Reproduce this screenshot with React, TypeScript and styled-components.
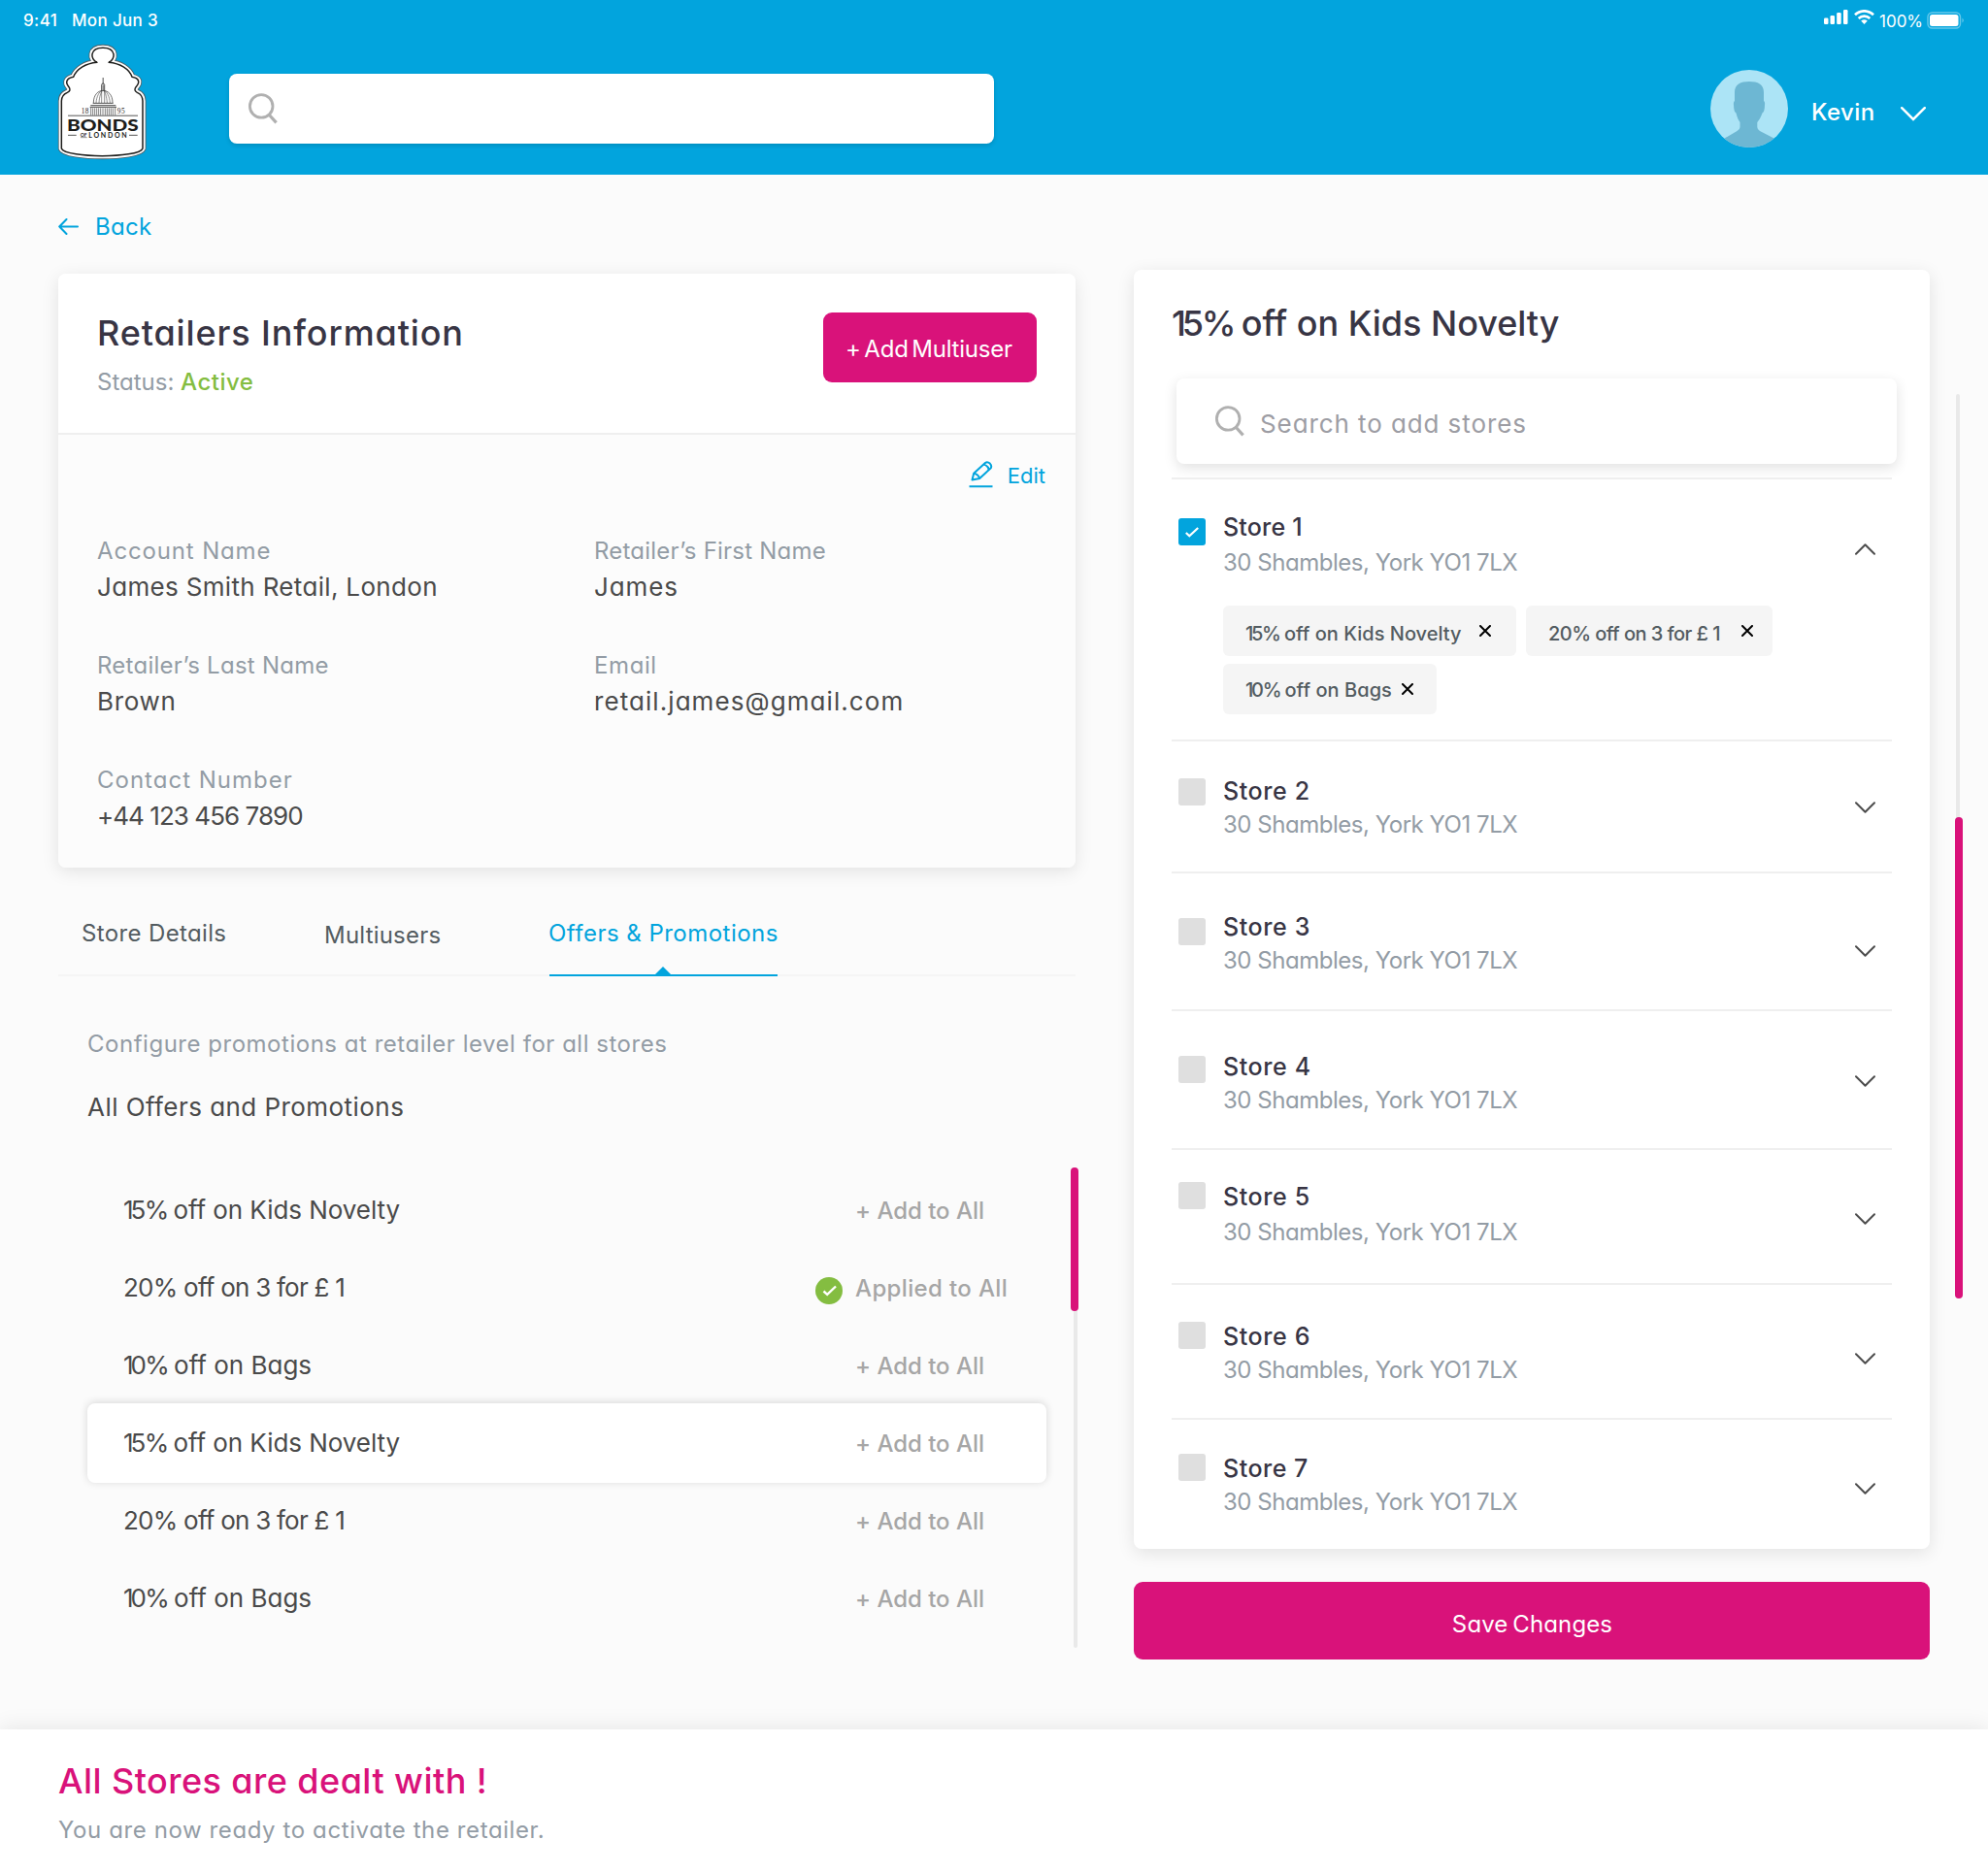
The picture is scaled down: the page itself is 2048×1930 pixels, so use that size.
import React from 'react';
import styled, { createGlobalStyle, css } from 'styled-components';

const color = {
  blue: '#02a4dd',
  pink: '#d9127a',
  green: '#84bd41',
  page: '#fbfbfb',
  heading: '#383544',
  value: '#4a4a4a',
  label: '#939ca5',
  slate: '#535c61',
  action: '#a6a6a6',
  line: '#efefef',
  track: '#e9e9e9',
};

const GlobalStyle = createGlobalStyle`
  *, *::before, *::after { box-sizing: border-box; }
  body {
    margin: 0;
    background: ${color.page};
    font-family: Inter, 'Open Sans', sans-serif;
    font-feature-settings: 'cv11', 'calt' 0;
  }
  svg { display: block; flex: none; }
  button { font: inherit; font-feature-settings: inherit; border: 0; padding: 0; background: none; }
`;

type Spacing = { $ls?: number };

const type = (size: number, line: number, weight: number, fill: string) => css<Spacing>`
  font-size: ${size}px;
  line-height: ${line}px;
  font-weight: ${weight};
  color: ${fill};
  letter-spacing: ${(p) => p.$ls ?? 0}px;
  white-space: nowrap;
`;

const Page = styled.div`
  width: 2048px;
  height: 1930px;
  display: flex;
  flex-direction: column;
  overflow: hidden;
`;

/* ---------- Header ---------- */

const Header = styled.header`
  height: 180px;
  flex: none;
  background: ${color.blue};
`;

const StatusBar = styled.div`
  height: 41px;
  display: flex;
  align-items: center;
  padding: 0 23px 0 24px;
`;

const StatusText = styled.span<Spacing & { $weight?: number }>`
  ${type(17, 20, 500, '#fff')}
  font-weight: ${(p) => p.$weight ?? 500};
`;

const Clock = styled(StatusText)`
  width: 50px;
`;

const StatusIcons = styled.div`
  margin-left: auto;
  height: 41px;
  display: flex;
  align-items: flex-start;

  svg:nth-child(1) { margin-top: 10px; }
  svg:nth-child(2) { margin: 10px 5px 0 6px; }
  ${StatusText} { margin-top: 12px; width: 49px; }
  svg:nth-child(4) { margin-top: 12px; }
`;

const NavRow = styled.div`
  display: flex;
  align-items: flex-start;
  padding: 3px 64px 0 59px;
`;

const HeaderSearch = styled.div`
  width: 788px;
  height: 72px;
  margin: 32px 0 0 85px;
  padding: 20px;
  border-radius: 8px;
  background: #fff;
  box-shadow: 0 2px 4px rgba(0, 0, 0, 0.14);
`;

const UserMenu = styled.div`
  display: flex;
  align-items: center;
  margin: 28px 0 0 auto;

  > svg:last-child { margin-top: 10px; }
`;

const UserName = styled.span<Spacing>`
  ${type(24, 32, 500, '#fff')}
  width: 92px;
  margin: 7px 0 0 24px;
`;

/* ---------- Layout ---------- */

const Main = styled.main`
  height: 1602px;
  flex: none;
  display: flex;
  align-items: flex-start;
  padding-left: 60px;
`;

const LeftColumn = styled.section`
  width: 1048px;
  padding-top: 38px;
`;

const RightColumn = styled.section`
  width: 820px;
  margin-left: 60px;
  padding-top: 98px;
`;

const cardShadow = css`
  box-shadow: 0 4px 18px rgba(0, 0, 0, 0.1);
`;

/* ---------- Retailer card ---------- */

const BackLink = styled.a<Spacing>`
  ${type(24, 32, 400, color.blue)}
  display: flex;
  align-items: center;
  gap: 17px;
  margin-bottom: 32px;

  svg { margin-top: -2px; }
`;

const Card = styled.div`
  height: 612px;
  border-radius: 8px;
  overflow: hidden;
  background: #fcfcfc;
`;

const CardFrame = styled.div`
  border-radius: 8px;
  ${cardShadow}
`;

const CardHeader = styled.div`
  height: 166px;
  display: flex;
  justify-content: space-between;
  align-items: flex-start;
  padding: 39px 40px 0;
  background: #fff;
  border-bottom: 2px solid ${color.line};
`;

const Title = styled.h1<Spacing>`
  ${type(36, 44, 500, color.heading)}
  margin: 0 0 13px;
`;

const Status = styled.div<Spacing>`
  ${type(24, 32, 400, color.label)}
`;

const StatusValue = styled.span<Spacing>`
  ${type(24, 32, 500, color.green)}
`;

const PrimaryButton = styled.button<Spacing>`
  ${type(24, 32, 400, '#fff')}
  width: 220px;
  height: 72px;
  margin-top: 1px;
  padding: 3px 2px 0 0;
  border-radius: 9px;
  word-spacing: -3px;
  background: ${color.pink};
`;

const CardBody = styled.div`
  padding: 27px 31px 0 40px;
`;

const EditLink = styled.a<Spacing>`
  ${type(22, 30, 400, color.blue)}
  display: flex;
  justify-content: flex-end;
  gap: 15px;
`;

const Fields = styled.dl`
  display: grid;
  grid-template-columns: 512px 1fr;
  row-gap: 48px;
  margin: 47px 0 0;
`;

const FieldLabel = styled.dt<Spacing>`
  ${type(24, 32, 400, color.label)}
`;

const FieldValue = styled.dd<Spacing>`
  ${type(26, 34, 400, color.value)}
  margin: 4px 0 0;
`;

/* ---------- Tabs ---------- */

const Tabs = styled.nav`
  display: grid;
  grid-template-columns: 250px 232px 235px;
  height: 60px;
  margin-top: 52px;
  padding-left: 24px;
  border-bottom: 2px solid #f5f5f5;
`;

const Tab = styled.a<Spacing & { $active?: boolean; $drop?: number }>`
  ${type(24, 32, 400, color.slate)}
  height: 60px;
  padding-top: ${(p) => p.$drop ?? 0}px;
  ${(p) =>
    p.$active &&
    css`
      position: relative;
      color: ${color.blue};
      text-indent: -1px;
      border-bottom: 2px solid ${color.blue};

      &::after {
        content: '';
        position: absolute;
        left: 109px;
        bottom: 0;
        border: 8px solid transparent;
        border-top: 0;
        border-bottom-color: ${color.blue};
      }
    `}
`;

/* ---------- Offers ---------- */

const Hint = styled.p<Spacing>`
  ${type(24, 32, 400, color.label)}
  margin: 54px 0 32px 30px;
`;

const Subheading = styled.h2<Spacing>`
  ${type(26, 34, 400, color.value)}
  margin: 0 0 0 30px;
`;

const OfferArea = styled.div`
  display: flex;
  justify-content: space-between;
  height: 495px;
  margin: 45px -3px 0 30px;
`;

const OfferList = styled.ul`
  width: 988px;
  margin: 3px 0 0;
  padding: 0;
  list-style: none;
`;

const OfferRow = styled.li<{ $selected?: boolean }>`
  height: 80px;
  display: flex;
  align-items: center;
  padding: 2px 0 0 37px;
  ${(p) =>
    p.$selected &&
    css`
      height: 82px;
      margin-bottom: -2px;
      padding-top: 0;
      border-radius: 8px;
      background: #fff;
      box-shadow: 0 -1px 8px rgba(0, 0, 0, 0.15);
    `}
`;

const OfferName = styled.span<Spacing>`
  ${type(26, 34, 400, color.value)}
  flex: 1;
`;

const Kern = styled.span<{ $em: number }>`
  letter-spacing: ${(p) => p.$em}em;
`;

const OfferAction = styled.button<Spacing>`
  ${type(24, 32, 500, color.action)}
  width: 197px;
  padding-top: 1px;
  text-align: left;
`;

const AppliedMark = styled.span`
  width: 41px;
  padding-top: 5px;
`;

const Scrollbar = styled.div<{ $height: number; $from: number; $shift: number }>`
  position: relative;
  width: 8px;
  height: ${(p) => p.$height}px;
  padding-top: ${(p) => p.$from}px;

  &::before {
    content: '';
    position: absolute;
    top: 0;
    bottom: 0;
    left: ${(p) => p.$shift}px;
    width: 4px;
    border-radius: 2px;
    background: ${color.track};
  }
`;

const Thumb = styled.div<{ $height: number }>`
  position: relative;
  height: ${(p) => p.$height}px;
  border-radius: 4px;
  background: ${color.pink};
`;

const PageScrollbar = styled.div`
  margin: 226px 0 0 26px;
`;

/* ---------- Stores ---------- */

const StoreCard = styled.div`
  height: 1318px;
  padding: 33px 39px 0;
  border-radius: 8px;
  background: #fff;
  ${cardShadow}
`;

const StoreTitle = styled.h2<Spacing>`
  ${type(36, 44, 500, color.heading)}
  margin: 0 0 35px;
`;

const StoreSearch = styled.div<Spacing>`
  ${type(26, 34, 400, '#9d9da4')}
  width: 742px;
  height: 88px;
  margin: 0 0 14px 5px;
  padding-left: 40px;
  display: flex;
  align-items: center;
  gap: 16px;
  border-radius: 8px;
  background: #fff;
  box-shadow: 0 4px 14px rgba(0, 0, 0, 0.12);

  span { padding-top: 5px; }
`;

const StoreList = styled.ul`
  margin: 0;
  padding: 0;
  list-style: none;
  border-top: 2px solid ${color.line};
`;

const StoreRow = styled.li<{ $height: number }>`
  height: ${(p) => p.$height}px;
  display: flex;
  align-items: flex-start;
  padding: 0 17px 0 7px;

  &:not(:last-child) { border-bottom: 2px solid ${color.line}; }
`;

const Checkbox = styled.span<{ $checked?: boolean; $top: number }>`
  width: 28px;
  height: 28px;
  margin: ${(p) => p.$top}px 18px 0 0;
  flex: none;
  display: grid;
  place-items: center;
  border-radius: 3px;
  background: ${(p) => (p.$checked ? color.blue : '#dfdfdf')};
`;

const StoreInfo = styled.div<{ $top: number }>`
  flex: 1;
  padding-top: ${(p) => p.$top}px;
`;

const StoreName = styled.div<Spacing>`
  ${type(25, 32, 500, color.heading)}
`;

const StoreAddress = styled.div<Spacing & { $gap: number }>`
  ${type(24, 32, 400, color.label)}
  margin-top: ${(p) => p.$gap}px;
`;

const Toggle = styled.span<{ $top: number }>`
  margin-top: ${(p) => p.$top}px;
`;

const Chips = styled.div`
  width: 600px;
  display: flex;
  flex-wrap: wrap;
  gap: 8px 10px;
  margin-top: 28px;
`;

const Chip = styled.span<Spacing & { $width: number; $end: number; $drop: number }>`
  ${type(20, 26, 500, color.slate)}
  width: ${(p) => p.$width}px;
  height: 52px;
  display: flex;
  align-items: center;
  justify-content: space-between;
  padding: 0 ${(p) => p.$end}px 0 23px;
  border-radius: 6px;
  background: #f5f5f5;

  > span { padding-top: ${(p) => p.$drop}px; }
`;

const SaveButton = styled(PrimaryButton)`
  width: 820px;
  height: 80px;
  margin-top: 34px;
  padding: 8px 0 0 1px;
  word-spacing: -2px;
`;

/* ---------- Footer ---------- */

const Footer = styled.footer`
  height: 148px;
  padding: 31px 60px 0;
  background: #fff;
  box-shadow: 0 -4px 20px rgba(0, 0, 0, 0.07);
`;

const FooterTitle = styled.h2<Spacing>`
  ${type(36, 44, 500, color.pink)}
  margin: 0 0 13px;
`;

const FooterText = styled.p<Spacing>`
  ${type(24, 32, 400, color.label)}
  margin: 0;
`;

/* ---------- Icons ---------- */

const JAR =
  'M300 193C278 184 276 148 318 148C360 148 358 184 336 193C372 196 400 214 408 238C430 242 434 254 420 269Q412 280 424 286C438 292 441 300 441 312V459C436 475 370 482 316 482C262 482 196 475 190 459V312C190 300 194 292 208 286Q221 280 213 269C200 254 206 242 227 238C236 214 264 196 300 193Z';

const Logo = () => (
  <svg width="92" height="121" viewBox="177 132 276 363">
    <path d={JAR} fill="#fff" stroke="#4e5f67" strokeWidth="21" strokeLinejoin="round" />
    <path d={JAR} fill="#fff" stroke="#fff" strokeWidth="16" strokeLinejoin="round" />
    <path d={JAR} fill="#fff" stroke="#1d1d1b" strokeWidth="4.5" strokeLinejoin="round" />
    <g fill="none" stroke="#2b2b2b" strokeWidth="2">
      <path d="M318.500 240V260" strokeWidth="2.500" />
      <path d="M314 282V262Q318.500 252 323 262V282M318.500 262V282" strokeWidth="2.500" />
      <path d="M289 318C289 292 304 280 318.500 280C333 280 348 292 348 318" />
      <path d="M297 318C298 298 308 283 313 281M306 318C307 300 312 284 316 281M314 318V282M323 318V282M331 318C330 300 325 284 321 281M340 318C339 298 329 283 324 281" strokeWidth="1.600" />
      <path d="M287 319H350M280 326H358M278 331H360" strokeWidth="2.500" />
      <path d="M281 332V356M287 334V356M293 334V356M299 334V356M305 334V356M311 334V356M318 334V356M325 334V356M331 334V356M337 334V356M343 334V356M349 334V356M356 332V356" strokeWidth="1.800" />
      <path d="M210 357.500H426M210 418H236M399 418H425" strokeWidth="2.400" />
      <path d="M249 425H269" strokeWidth="1.500" />
    </g>
    <g fill="#1d1d1b">
      <text x="251" y="350" fontFamily="Liberation Serif, serif" fontSize="22" textLength="23">18</text>
      <text x="362" y="350" fontFamily="Liberation Serif, serif" fontSize="22" textLength="24">95</text>
      <text x="207" y="404" fontFamily="Lato, sans-serif" fontWeight="900" fontSize="52" textLength="221" lengthAdjust="spacingAndGlyphs">BONDS</text>
      <text x="248" y="422" fontFamily="Lato, sans-serif" fontWeight="700" fontSize="15" textLength="21">OF</text>
      <text x="274" y="426" fontFamily="Lato, sans-serif" fontWeight="700" fontSize="21" textLength="118">LONDON</text>
    </g>
  </svg>
);

const SearchIcon = () => (
  <svg width="30" height="32" viewBox="0 0 30 32" fill="none" stroke="#b0b0b0" strokeWidth="2.800">
    <circle cx="13.200" cy="13.400" r="11.800" />
    <path d="M21 22L28.600 30.400" strokeWidth="3.200" />
  </svg>
);

const SignalIcon = () => (
  <svg width="25" height="15" viewBox="0 0 25 15" fill="#fff">
    <rect x="0" y="8.500" width="4.500" height="6.500" rx="1.200" />
    <rect x="6.500" y="6" width="4.500" height="9" rx="1.200" />
    <rect x="13.200" y="3" width="4.500" height="12" rx="1.200" />
    <rect x="20" y="0" width="4.500" height="15" rx="1.200" />
  </svg>
);

const WifiIcon = () => (
  <svg width="21" height="15" viewBox="0 0 21 15" fill="none" stroke="#fff" strokeWidth="2.700">
    <path d="M1 5.300C6.500 0 14.500 0 20 5.300" />
    <path d="M4.700 9C8 5.900 13 5.900 16.300 9" />
    <path d="M7.200 11.500Q10.500 8.800 13.800 11.500L10.500 14.900Z" fill="#fff" stroke="none" />
  </svg>
);

const BatteryIcon = () => (
  <svg width="40" height="18" viewBox="0 0 40 18">
    <rect x="1" y="1" width="33.500" height="16" rx="4.500" fill="none" stroke="#fff" strokeOpacity="0.4" strokeWidth="1.400" />
    <rect x="3" y="3" width="29.500" height="12" rx="2.500" fill="#fff" />
    <path d="M36.500 6.500Q39 9 36.500 11.500Z" fill="#fff" fillOpacity="0.450" />
  </svg>
);

const Avatar = () => (
  <svg width="80" height="80" viewBox="0 0 80 80">
    <clipPath id="avatar-disc">
      <circle cx="40" cy="40" r="40" />
    </clipPath>
    <circle cx="40" cy="40" r="40" fill="#ace4f6" />
    <path
      clipPath="url(#avatar-disc)"
      fill="#6db7d3"
      d="M25 32V23C25 15 31 12 40 12C49 12 55 15 55 23V32Q56.500 33 56 36Q56 43 53.500 44.500C52 49 50 52 48.300 54V59Q48.300 61.500 51 63L65.500 70.500V80H14.500V70.500L27.500 63Q30.500 61.500 30.500 59V54C29 52 27.500 49 26.500 44.500Q24 43 24 36Q23.500 33 25 32Z"
    />
  </svg>
);

const UserChevron = () => (
  <svg width="26" height="15" viewBox="0 0 26 15" fill="none" stroke="#fff" strokeWidth="2.500" strokeLinecap="round">
    <path d="M1.200 1.200L13 13L24.800 1.200" />
  </svg>
);

const StoreChevron = ({ up }: { up?: boolean }) => (
  <svg width="21" height="12" viewBox="0 0 21 12" fill="none" stroke="#4d4d4d" strokeWidth="2" strokeLinecap="round" strokeLinejoin="round">
    <path d={up ? 'M1 10.700L10.500 1.300L20 10.700' : 'M1 1.300L10.500 10.700L20 1.300'} />
  </svg>
);

const BackArrow = () => (
  <svg width="21" height="18" viewBox="0 0 21 18" fill="none" stroke={color.blue} strokeWidth="2" strokeLinecap="round" strokeLinejoin="round">
    <path d="M20 9.500H1.200M8.500 2L1.200 9.500L8.500 17" />
  </svg>
);

const PencilIcon = () => (
  <svg width="25" height="28" viewBox="0 0 25 28" fill="none" stroke={color.blue} strokeWidth="2" strokeLinejoin="round">
    <path d="M3.500 19.600L5.200 12.800L17.200 1.800Q19.300 0.500 21.800 2.600Q24 5 22.800 7.200L11.200 18L3.500 19.600Z" />
    <path d="M15.300 3.600Q19.500 4.600 20.800 9M5.200 12.800Q9.800 13.600 11.200 18" />
    <path d="M0.500 26.200H24.500" />
  </svg>
);

const CheckCircle = () => (
  <svg width="28" height="28" viewBox="0 0 28 28">
    <circle cx="14" cy="14" r="14" fill={color.green} />
    <path d="M8.500 14.500L12.200 17.800L21 9.500" fill="none" stroke="#fff" strokeWidth="2.400" />
  </svg>
);

const CheckIcon = () => (
  <svg width="14" height="11" viewBox="0 0 14 11" fill="none" stroke="#fff" strokeWidth="2.200">
    <path d="M0.800 6L4.300 9.300L13.200 1" />
  </svg>
);

const CloseIcon = () => (
  <svg width="12" height="12" viewBox="0 0 12 12" stroke="#000" strokeWidth="2" strokeLinecap="round">
    <path d="M1 1L11 11M11 1L1 11" />
  </svg>
);

/* Sets a leading "1x%" tighter than the words that follow it. */
const PromoName = ({ text }: { text: string }) =>
  text.startsWith('1') ? (
    <>
      <Kern $em={-0.12}>{text[0]}</Kern>
      <Kern $em={-0.06}>{text[1]}</Kern>
      <Kern $em={-0.12}>{text[2]}</Kern>
      {text.slice(3)}
    </>
  ) : (
    <>{text}</>
  );

/* ---------- Data ---------- */

const fields = [
  { label: 'Account Name', value: 'James Smith Retail, London', l: 0.85, v: 0.33 },
  { label: 'Retailer’s First Name', value: 'James', l: 0.22, v: 0.9 },
  { label: 'Retailer’s Last Name', value: 'Brown', l: 0.26, v: 0.7 },
  { label: 'Email', value: 'retail.james@gmail.com', l: 0.6, v: 1.07 },
  { label: 'Contact Number', value: '+44 123 456 7890', l: 1, v: -0.95 },
];

const KIDS = '15% off on Kids Novelty';
const THREE = '20% off on 3 for £ 1';
const BAGS = '10% off on Bags';

const offers = [
  { name: KIDS, ls: -0.06 },
  { name: THREE, ls: -0.76, applied: true },
  { name: BAGS, ls: 0 },
  { name: KIDS, ls: -0.06, selected: true },
  { name: THREE, ls: -0.76 },
  { name: BAGS, ls: 0 },
];

const chips = [
  { name: KIDS, width: 302, end: 26, drop: 5, ls: 0.01 },
  { name: THREE, width: 254, end: 20, drop: 5, ls: -0.54 },
  { name: BAGS, width: 220, end: 24, drop: 2, ls: 0.05 },
];

const stores = [
  { name: 'Store 1', height: 270, check: 40, text: 33, gap: 5, toggle: 66, ls: 0.2, checked: true },
  { name: 'Store 2', height: 136, check: 38, text: 35, gap: 3, toggle: 62, ls: 0.6 },
  { name: 'Store 3', height: 142, check: 46, text: 39, gap: 3, toggle: 74, ls: 0.6 },
  { name: 'Store 4', height: 143, check: 46, text: 41, gap: 3, toggle: 66, ls: 0.6 },
  { name: 'Store 5', height: 139, check: 33, text: 32, gap: 5, toggle: 65, ls: 0.6 },
  { name: 'Store 6', height: 139, check: 38, text: 37, gap: 3, toggle: 70, ls: 0.6 },
  { name: 'Store 7', height: 133, check: 35, text: 34, gap: 3, toggle: 65, ls: 0.5 },
];

export default function App() {
  return (
    <Page>
      <GlobalStyle />
      <Header>
        <StatusBar>
          <Clock $ls={0.4}>9:41</Clock>
          <StatusText $ls={0.34}>Mon Jun 3</StatusText>
          <StatusIcons>
            <SignalIcon />
            <WifiIcon />
            <StatusText $weight={400}>100%</StatusText>
            <BatteryIcon />
          </StatusIcons>
        </StatusBar>
        <NavRow>
          <Logo />
          <HeaderSearch>
            <SearchIcon />
          </HeaderSearch>
          <UserMenu>
            <Avatar />
            <UserName $ls={0.4}>Kevin</UserName>
            <UserChevron />
          </UserMenu>
        </NavRow>
      </Header>

      <Main>
        <LeftColumn>
          <BackLink $ls={0.3}>
            <BackArrow />
            Back
          </BackLink>
          <CardFrame>
            <Card>
              <CardHeader>
                <div>
                  <Title $ls={0.87}>Retailers Information</Title>
                  <Status>
                    Status: <StatusValue $ls={0.5}>Active</StatusValue>
                  </Status>
                </div>
                <PrimaryButton $ls={-0.21}>+ Add Multiuser</PrimaryButton>
              </CardHeader>
              <CardBody>
                <EditLink>
                  <PencilIcon />
                  Edit
                </EditLink>
                <Fields>
                  {fields.map((f) => (
                    <div key={f.label}>
                      <FieldLabel $ls={f.l}>{f.label}</FieldLabel>
                      <FieldValue $ls={f.v}>{f.value}</FieldValue>
                    </div>
                  ))}
                </Fields>
              </CardBody>
            </Card>
          </CardFrame>

          <Tabs>
            <Tab $ls={0.36}>Store Details</Tab>
            <Tab $ls={0.2} $drop={2}>Multiusers</Tab>
            <Tab $ls={0.48} $active>Offers &amp; Promotions</Tab>
          </Tabs>

          <Hint $ls={0.52}>Configure promotions at retailer level for all stores</Hint>
          <Subheading $ls={0.45}>All Offers and Promotions</Subheading>

          <OfferArea>
            <OfferList>
              {offers.map((o, i) => (
                <OfferRow key={i} $selected={o.selected}>
                  <OfferName $ls={o.ls}>
                    <PromoName text={o.name} />
                  </OfferName>
                  <AppliedMark>{o.applied && <CheckCircle />}</AppliedMark>
                  <OfferAction $ls={o.applied ? 0.36 : -0.02}>
                    {o.applied ? 'Applied to All' : '+ Add to All'}
                  </OfferAction>
                </OfferRow>
              ))}
            </OfferList>
            <Scrollbar $height={495} $from={0} $shift={3}>
              <Thumb $height={148} />
            </Scrollbar>
          </OfferArea>
        </LeftColumn>

        <RightColumn>
          <StoreCard>
            <StoreTitle $ls={-0.04}>
              <PromoName text={KIDS} />
            </StoreTitle>
            <StoreSearch $ls={0.91}>
              <SearchIcon />
              <span>Search to add stores</span>
            </StoreSearch>
            <StoreList>
              {stores.map((s) => (
                <StoreRow key={s.name} $height={s.height}>
                  <Checkbox $checked={s.checked} $top={s.check}>
                    {s.checked && <CheckIcon />}
                  </Checkbox>
                  <StoreInfo $top={s.text}>
                    <StoreName $ls={s.ls}>{s.name}</StoreName>
                    <StoreAddress $ls={-0.47} $gap={s.gap}>30 Shambles, York YO1 7LX</StoreAddress>
                    {s.checked && (
                      <Chips>
                        {chips.map((c) => (
                          <Chip key={c.name} $width={c.width} $end={c.end} $drop={c.drop} $ls={c.ls}>
                            <span>
                              <PromoName text={c.name} />
                            </span>
                            <CloseIcon />
                          </Chip>
                        ))}
                      </Chips>
                    )}
                  </StoreInfo>
                  <Toggle $top={s.toggle}>
                    <StoreChevron up={s.checked} />
                  </Toggle>
                </StoreRow>
              ))}
            </StoreList>
          </StoreCard>
          <SaveButton $ls={0.12}>Save Changes</SaveButton>
        </RightColumn>

        <PageScrollbar>
          <Scrollbar $height={932} $from={436} $shift={1}>
            <Thumb $height={496} />
          </Scrollbar>
        </PageScrollbar>
      </Main>

      <Footer>
        <FooterTitle $ls={0.44}>All Stores are dealt with !</FooterTitle>
        <FooterText $ls={0.6}>You are now ready to activate the retailer.</FooterText>
      </Footer>
    </Page>
  );
}
